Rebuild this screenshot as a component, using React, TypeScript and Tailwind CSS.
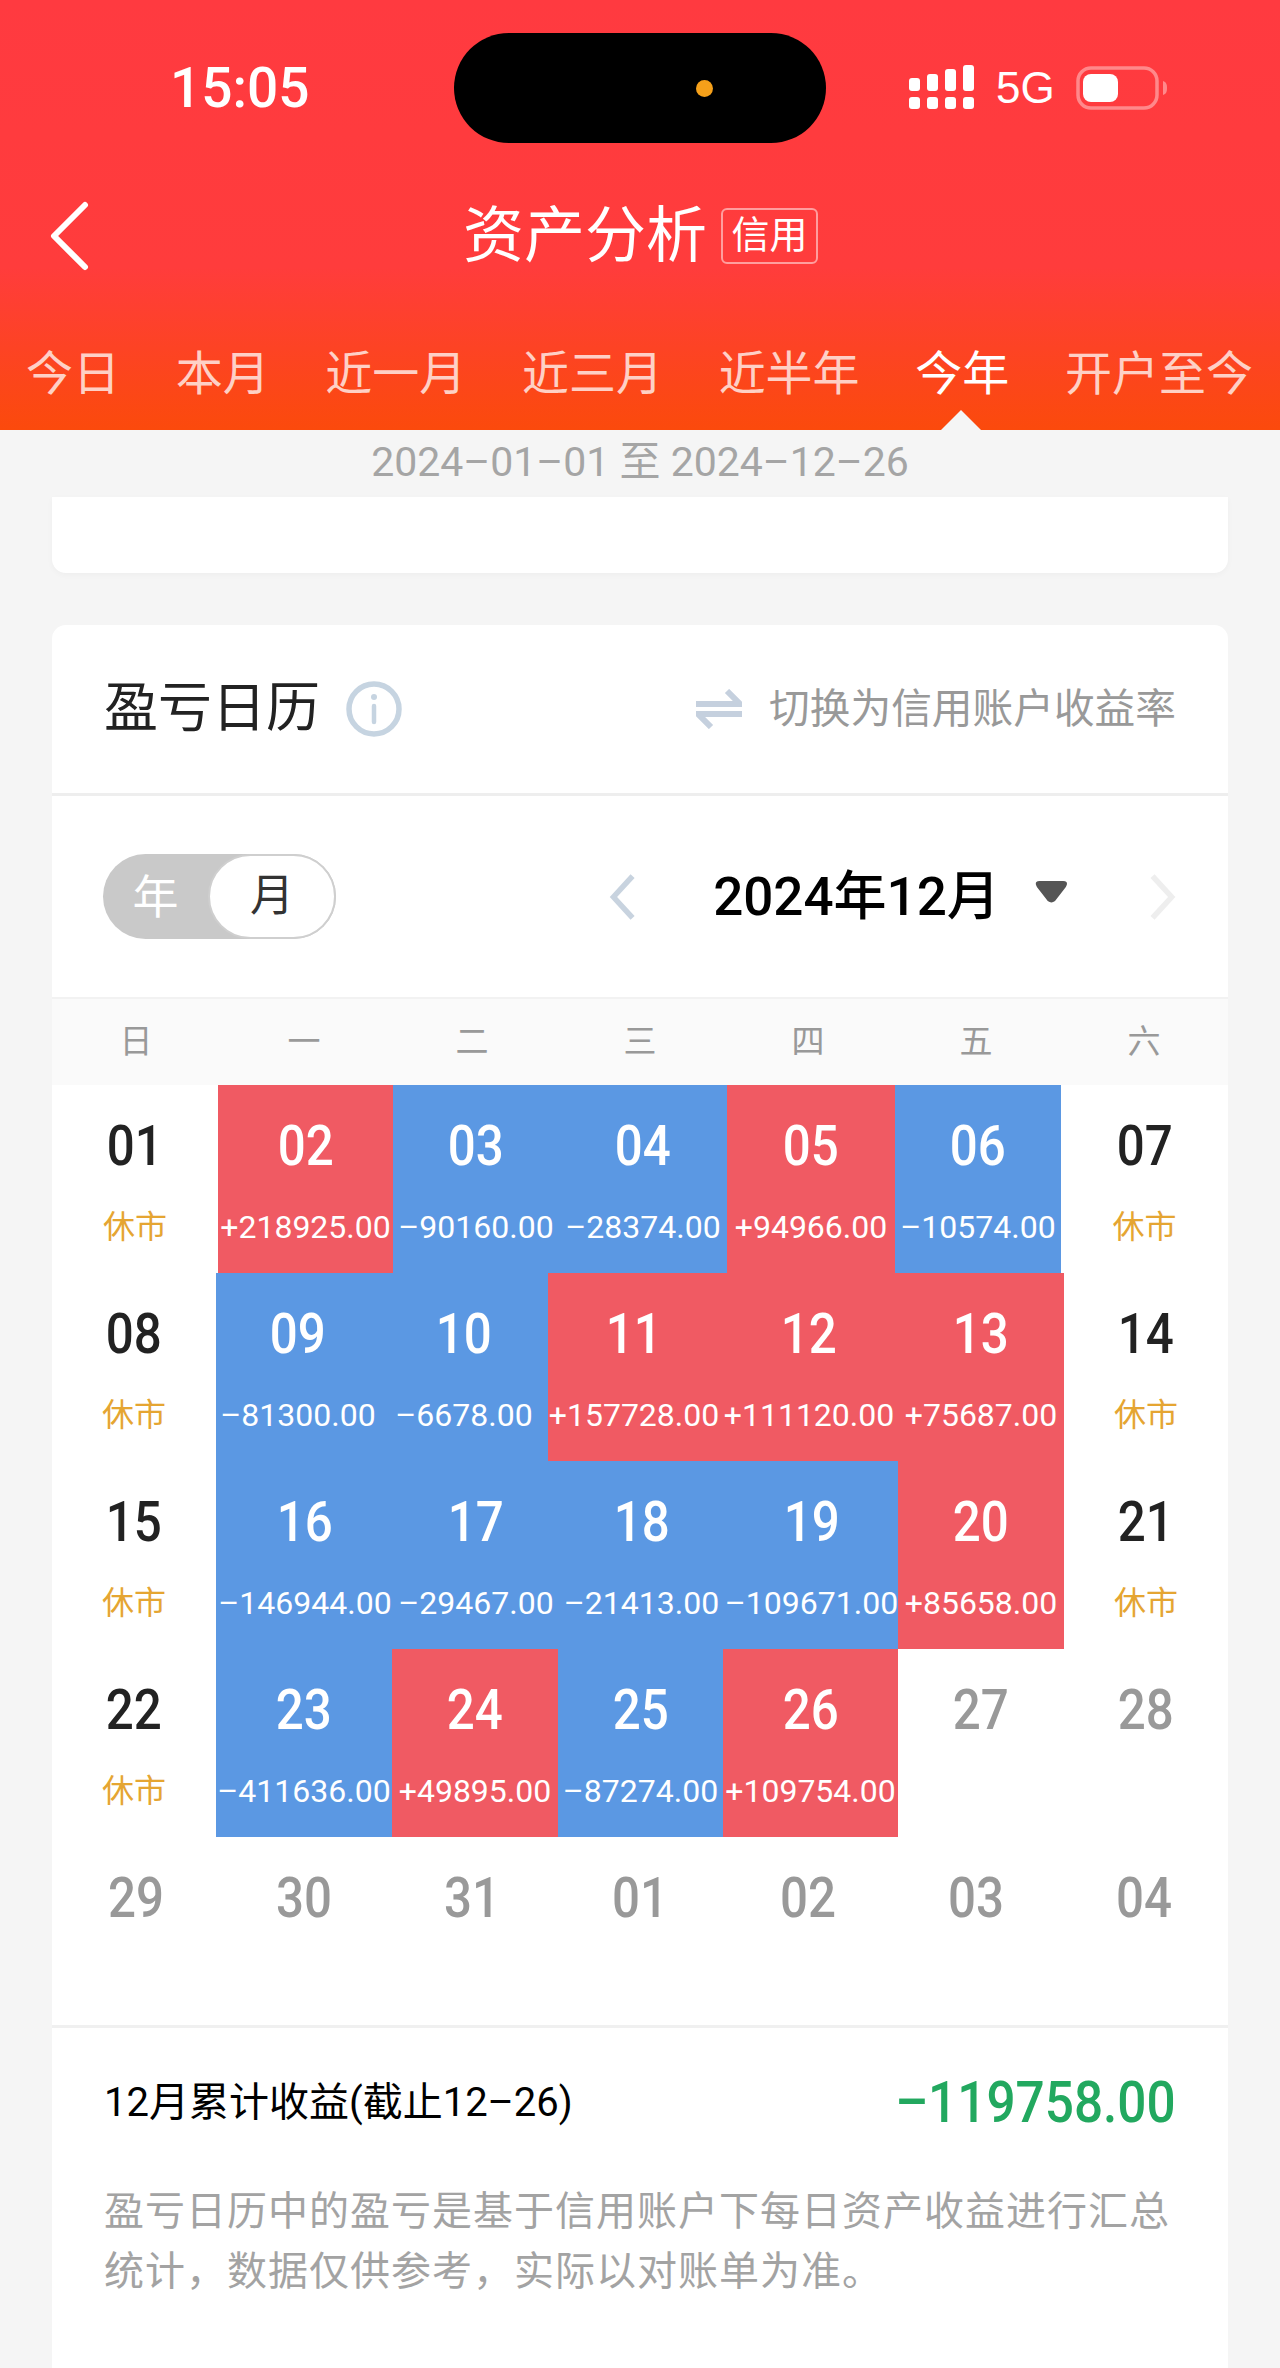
const cjk = "font-['Roboto','Noto_Sans_CJK_SC',sans-serif]";
const num = "font-['Roboto',sans-serif]";

type Cell = { w: string; day: string; val?: string; tone?: 'up' | 'down' | 'rest' };

const rows: Cell[][] = [
  [
    { w: 'w-[166px]', day: '01', tone: 'rest' },
    { w: 'w-[175px]', day: '02', val: '+218925.00', tone: 'up' },
    { w: 'w-[166px]', day: '03', val: '–90160.00', tone: 'down' },
    { w: 'w-[168px]', day: '04', val: '–28374.00', tone: 'down' },
    { w: 'w-[168px]', day: '05', val: '+94966.00', tone: 'up' },
    { w: 'w-[166px]', day: '06', val: '–10574.00', tone: 'down' },
    { w: 'w-[167px]', day: '07', tone: 'rest' },
  ],
  [
    { w: 'w-[164px]', day: '08', tone: 'rest' },
    { w: 'w-[164px]', day: '09', val: '–81300.00', tone: 'down' },
    { w: 'w-[168px]', day: '10', val: '–6678.00', tone: 'down' },
    { w: 'w-[172px]', day: '11', val: '+157728.00', tone: 'up' },
    { w: 'w-[178px]', day: '12', val: '+111120.00', tone: 'up' },
    { w: 'w-[166px]', day: '13', val: '+75687.00', tone: 'up' },
    { w: 'w-[164px]', day: '14', tone: 'rest' },
  ],
  [
    { w: 'w-[164px]', day: '15', tone: 'rest' },
    { w: 'w-[178px]', day: '16', val: '–146944.00', tone: 'down' },
    { w: 'w-[164px]', day: '17', val: '–29467.00', tone: 'down' },
    { w: 'w-[167px]', day: '18', val: '–21413.00', tone: 'down' },
    { w: 'w-[173px]', day: '19', val: '–109671.00', tone: 'down' },
    { w: 'w-[166px]', day: '20', val: '+85658.00', tone: 'up' },
    { w: 'w-[164px]', day: '21', tone: 'rest' },
  ],
  [
    { w: 'w-[164px]', day: '22', tone: 'rest' },
    { w: 'w-[176px]', day: '23', val: '–411636.00', tone: 'down' },
    { w: 'w-[166px]', day: '24', val: '+49895.00', tone: 'up' },
    { w: 'w-[165px]', day: '25', val: '–87274.00', tone: 'down' },
    { w: 'w-[175px]', day: '26', val: '+109754.00', tone: 'up' },
    { w: 'w-[166px]', day: '27' },
    { w: 'w-[164px]', day: '28' },
  ],
];

const tabs = ['今日', '本月', '近一月', '近三月', '近半年', '今年', '开户至今'];
const weekdays = ['日', '一', '二', '三', '四', '五', '六'];
const nextDays = ['29', '30', '31', '01', '02', '03', '04'];

function DayCell({ cell }: { cell: Cell }) {
  const bg = cell.tone === 'up' ? 'bg-[#f05a63]' : cell.tone === 'down' ? 'bg-[#5b98e3]' : '';
  const color = cell.tone === 'up' || cell.tone === 'down' ? 'text-white' : cell.tone === 'rest' ? 'text-[#222222]' : 'text-[#999999]';
  return (
    <div className={`${cell.w} ${bg} ${color} flex flex-col items-center`}>
      <div className={`${num} mt-[31px] text-[56px] font-medium leading-[60px] scale-x-[0.88] whitespace-nowrap`}>{cell.day}</div>
      {cell.val && <div className={`${num} mt-[32px] text-[32px] leading-[38px] whitespace-nowrap`}>{cell.val}</div>}
      {cell.tone === 'rest' && <div className={`${cjk} mt-[31px] text-[32px] leading-[40px] text-[#e5a532]`}>休市</div>}
    </div>
  );
}

function Signal() {
  return (
    <svg width="66" height="46" viewBox="0 0 66 46" fill="white">
      <rect x="0" y="13" width="11" height="13" rx="3" />
      <rect x="18" y="9" width="11" height="17" rx="3" />
      <rect x="36" y="4" width="11" height="22" rx="3" />
      <rect x="54" y="0" width="11" height="26" rx="3" />
      <rect x="0" y="32" width="11" height="12" rx="3" />
      <rect x="18" y="32" width="11" height="12" rx="3" />
      <rect x="36" y="32" width="11" height="12" rx="3" />
      <rect x="54" y="32" width="11" height="12" rx="3" />
    </svg>
  );
}

function Battery() {
  return (
    <svg width="92" height="44" viewBox="0 0 92 44">
      <rect x="2" y="2" width="79" height="40" rx="13" fill="none" stroke="white" strokeOpacity="0.4" strokeWidth="3.5" />
      <rect x="7" y="8" width="35" height="28" rx="8" fill="white" />
      <path d="M87 15c3 1 4 3 4 7s-1 6-4 7z" fill="white" fillOpacity="0.4" />
    </svg>
  );
}

export default function App() {
  return (
    <div className={`${cjk} w-[1280px] min-h-[2368px] bg-[#f5f5f5] flex flex-col overflow-hidden`}>
      <div className="h-[430px] bg-[linear-gradient(180deg,#ff3a40_0%,#ff3c3c_62%,#fb4a0c_100%)] text-white flex flex-col">
        <div className="flex items-center pt-[33px] h-[143px] pl-[170px]">
          <div className="w-[284px] font-['Roboto',sans-serif] font-medium text-[55px] leading-[60px]">15:05</div>
          <div className="w-[372px] h-[110px] rounded-[55px] bg-black flex items-center justify-end pr-[113px]">
            <div className="w-[17px] h-[17px] rounded-full bg-[#f5a01a]" />
          </div>
          <div className="ml-[83px] flex items-center">
            <Signal />
            <div className="ml-[21px] font-['Liberation_Sans',sans-serif] text-[44px] leading-[50px]">5G</div>
            <div className="ml-[21px]"><Battery /></div>
          </div>
        </div>

        <div className="flex items-center h-[92px] mt-[47px] pl-[47px]">
          <svg width="44" height="70" viewBox="0 0 44 70" fill="none" stroke="white" strokeWidth="6" strokeLinecap="round" strokeLinejoin="round">
            <path d="M38 4 7 35l31 31" />
          </svg>
          <div className="ml-[372px] text-[61px] leading-[70px]">资产分析</div>
          <div className="ml-[14px] h-[56px] w-[97px] rounded-[6px] border-2 border-white/50 text-[38px] leading-[50px] text-center">信用</div>
        </div>

        <div className="relative flex-1 flex justify-between items-center pl-[26px] pr-[27px] mt-[3px] pt-[33px]">
          {tabs.map((t) => (
            <div key={t} className={`text-[47px] leading-[56px] whitespace-nowrap ${t === '今年' ? 'text-white' : 'text-white/75'}`}>{t}</div>
          ))}
          <div className="absolute left-[941px] bottom-0 w-0 h-0 border-x-[20px] border-x-transparent border-b-[20px] border-b-[#f5f5f5]" />
        </div>
      </div>

      <div className="h-[67px] flex items-center justify-center text-[41px] text-[#a5a5a5] leading-[50px] pb-[4px]">2024–01–01 至 2024–12–26</div>

      <div className="mx-[52px] h-[76px] bg-white rounded-b-[14px] shadow-[0_2px_6px_rgba(0,0,0,0.03)]" />

      <div className="mx-[52px] mt-[52px] flex-1 bg-white rounded-t-[14px] flex flex-col">
        <div className="h-[168px] flex items-center justify-between px-[52px] border-b-[3px] border-[#eeeeee] box-content">
          <div className="flex items-center">
            <div className="text-[54px] leading-[60px] text-[#222222]">盈亏日历</div>
            <svg className="ml-[26px]" width="56" height="56" viewBox="0 0 56 56" fill="none" stroke="#c6d4e1">
              <circle cx="28" cy="28" r="25" strokeWidth="5.5" />
              <path d="M28 25v16" strokeWidth="4.5" strokeLinecap="round" />
              <circle cx="28" cy="16" r="3" fill="#c6d4e1" stroke="none" />
            </svg>
          </div>
          <div className="flex items-center">
            <svg width="46" height="40" viewBox="0 0 46 40" fill="none" stroke="#c5d0de" strokeWidth="6">
              <path d="M0 15h44L31 2" />
              <path d="M46 25H2l13 13" />
            </svg>
            <div className="ml-[27px] text-[40.7px] leading-[50px] text-[#999999]">切换为信用账户收益率</div>
          </div>
        </div>

        <div className="h-[201px] flex items-center px-[51px] border-b-[2px] border-[#f2f2f2] box-content">
          <div className="w-[233px] h-[85px] rounded-full bg-[#c9c9c9] flex items-center">
            <div className="w-[105px] text-center text-[46px] leading-[56px] text-white">年</div>
            <div className="w-[128px] h-[85px] rounded-full bg-white border-2 border-[#cfcfcf] text-center text-[44px] leading-[80px] text-[#333333]">月</div>
          </div>
          <svg className="ml-[272px]" width="32" height="50" viewBox="0 0 32 50" fill="none" stroke="#c8d3df" strokeWidth="6">
            <path d="M27 2 6 25l21 23" />
          </svg>
          <div className="ml-[76px] w-[279px] text-[53px] font-medium leading-[64px] text-black whitespace-nowrap">2024年12月</div>
          <svg className="ml-[43px] mb-[10px]" width="36" height="26" viewBox="0 0 36 26" fill="#555555">
            <path d="M5 1h26q5 0 4 4q-1 3-3 5L22 23q-4 3-8 0L4 10q-2-2-3-5q-1-4 4-4z" />
          </svg>
          <svg className="ml-[80px]" width="32" height="50" viewBox="0 0 32 50" fill="none" stroke="#eeeeee" strokeWidth="6">
            <path d="M5 2l21 23L5 48" />
          </svg>
        </div>

        <div className="grid grid-cols-7 h-[86px] items-center bg-[#fafafa]">
          {weekdays.map((d) => (
            <div key={d} className="text-center text-[33px] leading-[44px] text-[#999999]">{d}</div>
          ))}
        </div>

        {rows.map((row) => (
          <div key={row[0].day} className="flex h-[188px]">
            {row.map((cell) => (
              <DayCell key={cell.day} cell={cell} />
            ))}
          </div>
        ))}

        <div className="grid grid-cols-7 h-[188px] border-b-[3px] border-[#f0f0f0] box-content">
          {nextDays.map((d) => (
            <div key={d} className={`${num} mt-[31px] text-center text-[56px] font-medium leading-[60px] scale-x-[0.88] text-[#999999]`}>{d}</div>
          ))}
        </div>

        <div className="px-[52px] pt-[45px]">
          <div className="flex items-center justify-between">
            <div className="text-[40px] leading-[50px] text-black">12月累计收益(截止12–26)</div>
            <div className={`${num} text-[57px] font-medium leading-[60px] scale-x-[0.9] origin-right text-[#22a85f] whitespace-nowrap`}>–119758.00</div>
          </div>
          <div className="mt-[49px] text-[40px] leading-[60px] tracking-[1px] text-[#a3a3a3]">
            盈亏日历中的盈亏是基于信用账户下每日资产收益进行汇总统计，数据仅供参考，实际以对账单为准。
          </div>
        </div>
      </div>
    </div>
  );
}
